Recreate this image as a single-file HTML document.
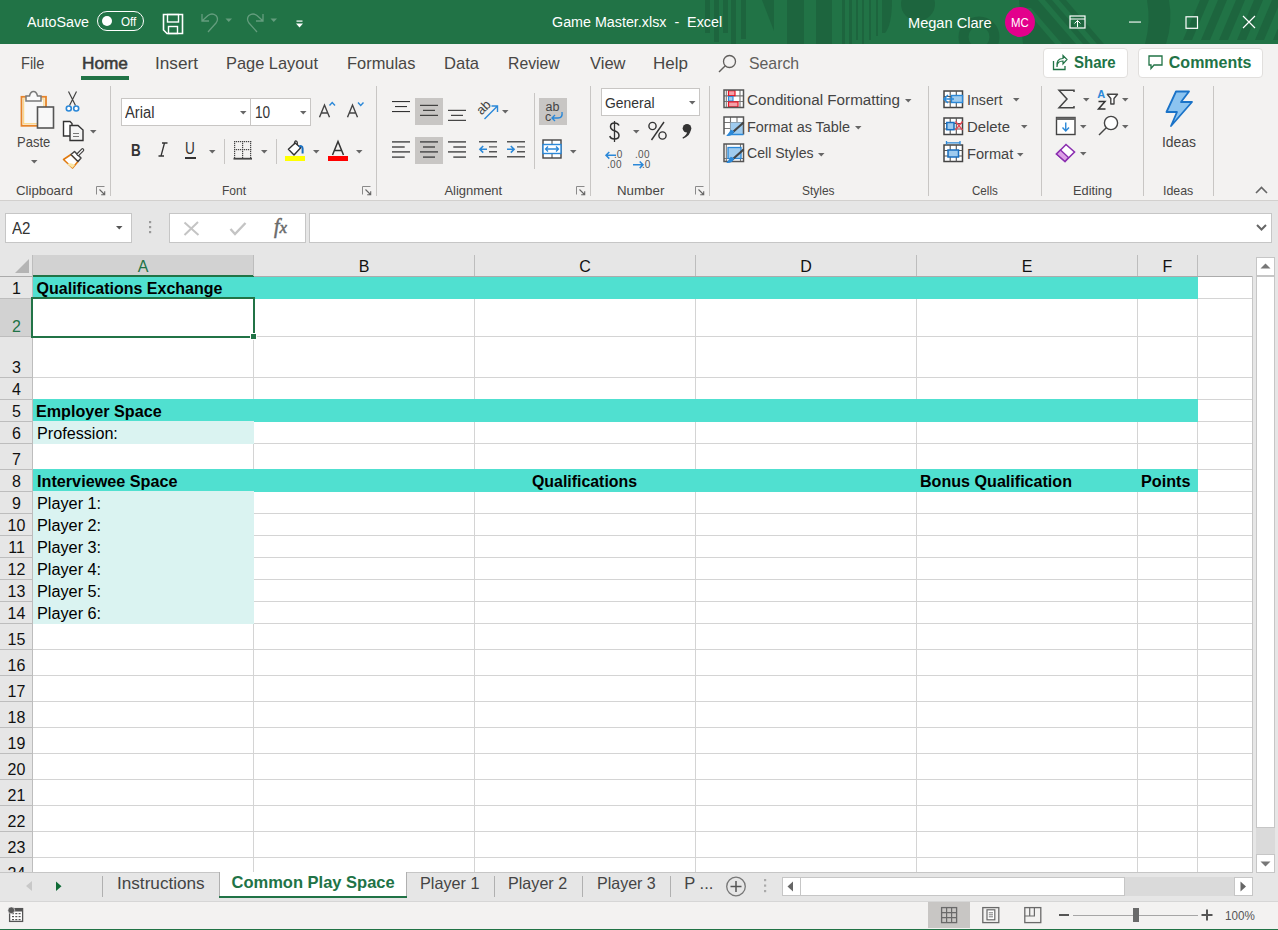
<!DOCTYPE html><html><head><meta charset="utf-8"><style>html,body{margin:0;padding:0}body{width:1278px;height:930px;position:relative;overflow:hidden;background:#f3f2f1;font-family:"Liberation Sans",sans-serif}.t{position:absolute;white-space:pre;line-height:normal;font-family:"Liberation Sans",sans-serif;transform-origin:0 0}svg{overflow:visible}</style></head><body>
<div style="position:absolute;left:0px;top:0px;width:1278px;height:44px;background:#217346"></div>
<svg style="position:absolute;left:0px;top:0px;overflow:hidden;" width="1278" height="44" viewBox="0 0 1278 44"><rect x="705" y="0" width="5" height="33" fill="#1d653e"/><rect x="714" y="0" width="5" height="42" fill="#1d653e"/><rect x="723" y="0" width="5" height="33" fill="#1d653e"/><rect x="731" y="0" width="5" height="44" fill="#1d653e"/><rect x="741" y="0" width="5" height="39" fill="#1d653e"/><rect x="787" y="0" width="17" height="44" fill="#1d653e"/><rect x="816" y="0" width="16" height="44" fill="#1d653e"/><rect x="842" y="0" width="3" height="44" fill="#1d653e"/><rect x="849" y="0" width="3" height="44" fill="#1d653e"/><rect x="856" y="0" width="2" height="40" fill="#1d653e"/><rect x="862" y="0" width="2" height="44" fill="#1d653e"/><rect x="869" y="0" width="2" height="40" fill="#1d653e"/><rect x="876" y="0" width="2" height="36" fill="#1d653e"/><path d="M762 0 L774 0 L774 31 Z" fill="#1d653e"/><circle cx="918" cy="4" r="17" fill="#1d653e"/><circle cx="979" cy="37" r="15.5" fill="none" stroke="#1d653e" stroke-width="10"/><path d="M1019 0 H1066 L1104 44 H1023 Q1021 22 1019 0 Z" fill="#1d653e"/><path d="M1038 0 H1045 L1083.0 44 H1076.0 Z" fill="#217346"/><path d="M1052 0 H1059 L1097.0 44 H1090.0 Z" fill="#217346"/><path d="M1024 8 H1031 L1062.1 44 H1055.1 Z" fill="#217346"/><path d="M1147 0 H1169 Q1173 22 1166 44 H1145 Q1151 22 1147 0 Z" fill="#1d653e"/><path d="M882 0 H892 Q892 25 885 33 H882 Z" fill="#1d653e"/><path d="M1200 0 H1209 L1192 40 H1183 Z" fill="#1d653e"/><path d="M1218 0 H1227 L1210 40 H1201 Z" fill="#1d653e"/><path d="M1236 0 H1245 L1228 40 H1219 Z" fill="#1d653e"/><path d="M1254 0 H1263 L1246 40 H1237 Z" fill="#1d653e"/><path d="M1272 0 H1281 L1264 40 H1255 Z" fill="#1d653e"/><path d="M1290 0 H1299 L1282 40 H1273 Z" fill="#1d653e"/></svg>
<div class="t" style="left:27.30px;top:12.96px;font-size:15.4px;color:#fff;transform:scaleX(0.9302);">AutoSave</div>
<div style="position:absolute;left:97px;top:11px;width:45px;height:18px;border:1.2px solid #fff;border-radius:10px"></div>
<div style="position:absolute;left:102px;top:16px;width:10px;height:10px;background:#fff;border-radius:50%"></div>
<div class="t" style="left:120.60px;top:13.84px;font-size:13px;color:#fff;transform:scaleX(0.8974);">Off</div>
<svg style="position:absolute;left:162px;top:13px;" width="22" height="22" viewBox="0 0 22 22"><path d="M1.5 1.5 H20.5 V20.5 H5 L1.5 17 Z" fill="none" stroke="#fff" stroke-width="1.6"/><rect x="5.5" y="1.5" width="11" height="7.5" fill="none" stroke="#fff" stroke-width="1.4"/><rect x="6.5" y="13.5" width="9" height="7" fill="none" stroke="#fff" stroke-width="1.4"/></svg>
<svg style="position:absolute;left:200px;top:12px;" width="20" height="22" viewBox="0 0 20 22"><path d="M2 2 V9 H9 M2.5 8.5 L8 3.5 Q12 0.5 16 3.5 Q19 7 16 11 L8 20" fill="none" stroke="rgba(255,255,255,0.3)" stroke-width="1.3"/></svg>
<svg style="position:absolute;left:225px;top:18px;" width="8" height="5" viewBox="0 0 8 5"><path d="M0.5 0.5 H7 L3.75 4 Z" fill="rgba(255,255,255,0.3)"/></svg>
<svg style="position:absolute;left:245px;top:12px;" width="20" height="22" viewBox="0 0 20 22"><path d="M18 2 V9 H11 M17.5 8.5 L12 3.5 Q8 0.5 4 3.5 Q1 7 4 11 L12 20" fill="none" stroke="rgba(255,255,255,0.3)" stroke-width="1.3"/></svg>
<svg style="position:absolute;left:270px;top:18px;" width="8" height="5" viewBox="0 0 8 5"><path d="M0.5 0.5 H7 L3.75 4 Z" fill="rgba(255,255,255,0.3)"/></svg>
<svg style="position:absolute;left:296px;top:20px;" width="7" height="8" viewBox="0 0 7 8"><rect x="0.5" y="0.5" width="6" height="1.2" fill="#fff"/><path d="M0 3.5 H7 L3.5 7.5 Z" fill="#fff"/></svg>
<div class="t" style="left:552.20px;top:12.75px;font-size:15.3px;color:#fff;transform:scaleX(0.9350);">Game Master.xlsx  -  Excel</div>
<div class="t" style="left:908.00px;top:13.87px;font-size:15.5px;color:#fff;transform:scaleX(0.9410);">Megan Clare</div>
<div style="position:absolute;left:1005px;top:7px;width:30px;height:30px;background:#e3008c;border-radius:50%"></div>
<div class="t" style="left:1010.70px;top:15.13px;font-size:13px;color:#fff;transform:scaleX(0.8756);">MC</div>
<svg style="position:absolute;left:1069px;top:15px;" width="17" height="14" viewBox="0 0 17 14"><rect x="1" y="1" width="15" height="12" fill="none" stroke="#fff" stroke-width="1.2"/><line x1="1" y1="4" x2="16" y2="4" stroke="#fff" stroke-width="1"/><path d="M5.5 8.5 L8.5 5.5 L11.5 8.5 M8.5 5.5 V12" fill="none" stroke="#fff" stroke-width="1"/></svg>
<svg style="position:absolute;left:1129px;top:21px;" width="12" height="2" viewBox="0 0 12 2"><rect x="0" y="0.5" width="12" height="1.1" fill="#fff"/></svg>
<svg style="position:absolute;left:1185px;top:16px;" width="14" height="13" viewBox="0 0 14 13"><rect x="1" y="0.8" width="11.5" height="11.5" fill="none" stroke="#fff" stroke-width="1.2"/></svg>
<svg style="position:absolute;left:1242px;top:15px;" width="14" height="14" viewBox="0 0 14 14"><path d="M1 1 L13 13 M13 1 L1 13" stroke="#fff" stroke-width="1.2"/></svg>
<div class="t" style="left:21.00px;top:53.62px;font-size:17px;color:#484644;transform:scaleX(0.8550);">File</div>
<div class="t" style="left:155.00px;top:53.62px;font-size:17px;color:#484644;transform:scaleX(1.0118);">Insert</div>
<div class="t" style="left:226.00px;top:53.62px;font-size:17px;color:#484644;transform:scaleX(0.9638);">Page Layout</div>
<div class="t" style="left:347.00px;top:53.62px;font-size:17px;color:#484644;transform:scaleX(0.9663);">Formulas</div>
<div class="t" style="left:444.00px;top:53.62px;font-size:17px;color:#484644;transform:scaleX(0.9734);">Data</div>
<div class="t" style="left:508.30px;top:53.62px;font-size:17px;color:#484644;transform:scaleX(0.9272);">Review</div>
<div class="t" style="left:589.50px;top:53.62px;font-size:17px;color:#484644;transform:scaleX(0.9713);">View</div>
<div class="t" style="left:653.00px;top:53.62px;font-size:17px;color:#484644;">Help</div>
<div class="t" style="left:748.60px;top:53.62px;font-size:17px;color:#605e5c;transform:scaleX(0.9315);">Search</div>
<div class="t" style="left:81.50px;top:53.62px;font-size:17px;color:#3b3a39;transform:scaleX(1.0134);-webkit-text-stroke:0.55px #3b3a39;">Home</div>
<div style="position:absolute;left:81px;top:76px;width:48px;height:4px;background:#217346"></div>
<svg style="position:absolute;left:717px;top:54px;" width="21" height="21" viewBox="0 0 21 21"><circle cx="12.5" cy="7.5" r="6" fill="none" stroke="#605e5c" stroke-width="1.3"/><line x1="8.3" y1="11.7" x2="2" y2="18" stroke="#605e5c" stroke-width="1.4"/></svg>
<div style="position:absolute;left:1043px;top:48px;width:83px;height:28px;background:#fff;border:1px solid #e1dfdd;border-radius:4px"></div>
<div style="position:absolute;left:1138px;top:48px;width:123px;height:28px;background:#fff;border:1px solid #e1dfdd;border-radius:4px"></div>
<svg style="position:absolute;left:1052px;top:55px;" width="16" height="16" viewBox="0 0 16 16"><path d="M1.5 6 V14.5 H13 V11" fill="none" stroke="#217346" stroke-width="1.3"/><path d="M5 12 Q5 6 11 6 V9 L15 4.5 L11 0.5 V3.5 Q4 3.5 5 12 Z" fill="none" stroke="#217346" stroke-width="1.2"/></svg>
<div class="t" style="left:1073.70px;top:54.42px;font-size:16px;color:#217346;font-weight:bold;transform:scaleX(0.9375);">Share</div>
<svg style="position:absolute;left:1148px;top:55px;" width="15" height="15" viewBox="0 0 15 15"><path d="M1 1 H14 V10 H6 L3 13.5 V10 H1 Z" fill="none" stroke="#217346" stroke-width="1.3"/></svg>
<div class="t" style="left:1168.80px;top:54.42px;font-size:16px;color:#217346;font-weight:bold;">Comments</div>
<div style="position:absolute;left:110px;top:86px;width:1px;height:110px;background:#c8c6c4"></div>
<div style="position:absolute;left:376px;top:86px;width:1px;height:110px;background:#c8c6c4"></div>
<div style="position:absolute;left:590px;top:86px;width:1px;height:110px;background:#c8c6c4"></div>
<div style="position:absolute;left:709px;top:86px;width:1px;height:110px;background:#c8c6c4"></div>
<div style="position:absolute;left:928px;top:86px;width:1px;height:110px;background:#c8c6c4"></div>
<div style="position:absolute;left:1041px;top:86px;width:1px;height:110px;background:#c8c6c4"></div>
<div style="position:absolute;left:1143px;top:86px;width:1px;height:110px;background:#c8c6c4"></div>
<div style="position:absolute;left:1213px;top:86px;width:1px;height:110px;background:#c8c6c4"></div>
<div style="position:absolute;left:0px;top:200px;width:1278px;height:1px;background:#d2d0ce"></div>
<div class="t" style="left:15.70px;top:182.94px;font-size:13px;color:#484644;transform:scaleX(1.0208);">Clipboard</div>
<div class="t" style="left:221.60px;top:182.94px;font-size:13px;color:#484644;transform:scaleX(0.9269);">Font</div>
<div class="t" style="left:444.40px;top:182.94px;font-size:13px;color:#484644;">Alignment</div>
<div class="t" style="left:616.50px;top:182.94px;font-size:13px;color:#484644;transform:scaleX(1.0235);">Number</div>
<div class="t" style="left:802.00px;top:182.94px;font-size:13px;color:#484644;transform:scaleX(0.9174);">Styles</div>
<div class="t" style="left:971.70px;top:182.94px;font-size:13px;color:#484644;transform:scaleX(0.8920);">Cells</div>
<div class="t" style="left:1072.50px;top:182.94px;font-size:13px;color:#484644;transform:scaleX(0.9829);">Editing</div>
<div class="t" style="left:1163.20px;top:182.94px;font-size:13px;color:#484644;transform:scaleX(0.9533);">Ideas</div>
<svg style="position:absolute;left:96px;top:186px;" width="10" height="10" viewBox="0 0 10 10"><path d="M0.5 8.5 V0.5 H8.5" fill="none" stroke="#8a8a8a" stroke-width="1"/><path d="M3.5 3.5 L8.5 8.5 M8.7 5.2 V8.7 H5.2" fill="none" stroke="#666" stroke-width="1.1"/></svg>
<svg style="position:absolute;left:362px;top:186px;" width="10" height="10" viewBox="0 0 10 10"><path d="M0.5 8.5 V0.5 H8.5" fill="none" stroke="#8a8a8a" stroke-width="1"/><path d="M3.5 3.5 L8.5 8.5 M8.7 5.2 V8.7 H5.2" fill="none" stroke="#666" stroke-width="1.1"/></svg>
<svg style="position:absolute;left:576px;top:186px;" width="10" height="10" viewBox="0 0 10 10"><path d="M0.5 8.5 V0.5 H8.5" fill="none" stroke="#8a8a8a" stroke-width="1"/><path d="M3.5 3.5 L8.5 8.5 M8.7 5.2 V8.7 H5.2" fill="none" stroke="#666" stroke-width="1.1"/></svg>
<svg style="position:absolute;left:695px;top:186px;" width="10" height="10" viewBox="0 0 10 10"><path d="M0.5 8.5 V0.5 H8.5" fill="none" stroke="#8a8a8a" stroke-width="1"/><path d="M3.5 3.5 L8.5 8.5 M8.7 5.2 V8.7 H5.2" fill="none" stroke="#666" stroke-width="1.1"/></svg>
<svg style="position:absolute;left:17px;top:89px;" width="40" height="42" viewBox="0 0 40 42"><rect x="4.5" y="7.8" width="24.5" height="29" fill="#f8f8f8" stroke="#e6842a" stroke-width="1.8"/><rect x="6.6" y="9.9" width="20.3" height="24.8" fill="#f8f8f8" stroke="#fbd88c" stroke-width="1.3"/><path d="M9 7 H12.5 Q13.5 2.6 16.5 2.6 Q19.5 2.6 20.5 7 H24 V12 H9 Z" fill="#fafafa" stroke="#7a7a7a" stroke-width="1.5"/><rect x="20.5" y="18" width="16" height="21" fill="#f8f8f8" stroke="#555" stroke-width="1.6"/></svg>
<div class="t" style="left:17.40px;top:133.23px;font-size:15px;color:#484644;transform:scaleX(0.8663);">Paste</div>
<svg style="position:absolute;left:31px;top:160px;" width="7" height="4" viewBox="0 0 7 4"><path d="M0 0 H6.5 L3.25 3.5 Z" fill="#666"/></svg>
<svg style="position:absolute;left:65px;top:91px;" width="16" height="22" viewBox="0 0 16 22"><path d="M3.5 0.5 L10.5 14.5 M11.5 0.5 L4.5 14.5" stroke="#444" stroke-width="1.2"/><circle cx="3.8" cy="17.5" r="2.5" fill="#fff" stroke="#2b88d8" stroke-width="1.6"/><circle cx="11.2" cy="17.5" r="2.5" fill="#fff" stroke="#2b88d8" stroke-width="1.6"/></svg>
<svg style="position:absolute;left:62px;top:120px;" width="23" height="22" viewBox="0 0 23 22"><path d="M1.5 1.5 H8 L10 3.5 V16 H1.5 Z" fill="#fff" stroke="#333" stroke-width="1.4"/><path d="M8 5.5 H16 L21 10 V20.5 H8 Z" fill="#f4f4f4" stroke="#333" stroke-width="1.4"/><path d="M11 13.5 H17 M11 16.5 H17" stroke="#777" stroke-width="1.2"/></svg>
<svg style="position:absolute;left:90px;top:130px;" width="7" height="4" viewBox="0 0 7 4"><path d="M0 0 H6.5 L3.25 3.5 Z" fill="#666"/></svg>
<svg style="position:absolute;left:62px;top:149px;" width="23" height="21" viewBox="0 0 23 21"><path d="M1.5 10.5 L9 5.5 L16 12.5 L10.5 19 Z" fill="#fff" stroke="#e07a10" stroke-width="1.6" stroke-linejoin="round"/><path d="M5 15 L10.5 19 L13 16 Q9 13 5 15 Z" fill="#fce6a4"/><path d="M9 5.5 L12.5 2.5 L19 9 L16 12.5 Z" fill="#fff" stroke="#444" stroke-width="1.5" stroke-linejoin="round"/><path d="M16.2 5.3 L20.5 1" stroke="#444" stroke-width="3.6" stroke-linecap="round"/><path d="M16.2 5.3 L20.5 1" stroke="#fff" stroke-width="1.2" stroke-linecap="round"/></svg>
<div style="position:absolute;left:121px;top:98px;width:130px;height:28px;background:#fff;border:1px solid #c8c6c4;box-sizing:border-box"></div>
<div style="position:absolute;left:250px;top:98px;width:61px;height:28px;background:#fff;border:1px solid #c8c6c4;box-sizing:border-box"></div>
<div class="t" style="left:124.50px;top:103.72px;font-size:16px;color:#333;transform:scaleX(0.9219);">Arial</div>
<svg style="position:absolute;left:240px;top:111px;" width="7" height="4" viewBox="0 0 7 4"><path d="M0 0 H6.5 L3.25 3.5 Z" fill="#666"/></svg>
<div class="t" style="left:255.20px;top:103.72px;font-size:16px;color:#333;transform:scaleX(0.8502);">10</div>
<svg style="position:absolute;left:300px;top:111px;" width="7" height="4" viewBox="0 0 7 4"><path d="M0 0 H6.5 L3.25 3.5 Z" fill="#666"/></svg>
<svg style="position:absolute;left:318px;top:100px;" width="19" height="19" viewBox="0 0 19 19"><path d="M1.5 17.3 L6.5 5 L11.5 17.3 M3.3 13 H9.7" fill="none" stroke="#444" stroke-width="1.4"/><path d="M11.5 5.5 L14.2 2.5 L17 5.5" fill="none" stroke="#2b88d8" stroke-width="1.4"/></svg>
<svg style="position:absolute;left:346px;top:100px;" width="19" height="19" viewBox="0 0 19 19"><path d="M1.5 17.3 L6.5 5 L11.5 17.3 M3.3 13 H9.7" fill="none" stroke="#444" stroke-width="1.4"/><path d="M12 2.5 L14.7 5.5 L17.5 2.5" fill="none" stroke="#2b88d8" stroke-width="1.4"/></svg>
<div class="t" style="left:130.60px;top:140.67px;font-size:16.5px;color:#333;font-weight:bold;transform:scaleX(0.8165);">B</div>
<svg style="position:absolute;left:158px;top:142px;" width="10" height="15" viewBox="0 0 10 15"><path d="M6.5 1 L3 14 M4 1 H9.5 M0.5 14 H6" fill="none" stroke="#333" stroke-width="1.3"/></svg>
<div class="t" style="left:185.40px;top:140.32px;font-size:16px;color:#333;transform:scaleX(0.8507);">U</div>
<div style="position:absolute;left:184.6px;top:157px;width:11.2px;height:1.6px;background:#333"></div>
<svg style="position:absolute;left:209px;top:150px;" width="7" height="4" viewBox="0 0 7 4"><path d="M0 0 H6.5 L3.25 3.5 Z" fill="#666"/></svg>
<div style="position:absolute;left:224px;top:139px;width:1px;height:25px;background:#c8c6c4"></div>
<svg style="position:absolute;left:233px;top:140px;" width="22" height="21" viewBox="0 0 22 21"><rect x="1" y="1" width="1.2" height="1.2" fill="#444"/><rect x="1" y="3" width="1.2" height="1.2" fill="#444"/><rect x="1" y="5" width="1.2" height="1.2" fill="#444"/><rect x="1" y="7" width="1.2" height="1.2" fill="#444"/><rect x="1" y="9" width="1.2" height="1.2" fill="#444"/><rect x="1" y="11" width="1.2" height="1.2" fill="#444"/><rect x="1" y="13" width="1.2" height="1.2" fill="#444"/><rect x="1" y="15" width="1.2" height="1.2" fill="#444"/><rect x="1" y="17" width="1.2" height="1.2" fill="#444"/><rect x="9" y="1" width="1.2" height="1.2" fill="#444"/><rect x="9" y="3" width="1.2" height="1.2" fill="#444"/><rect x="9" y="5" width="1.2" height="1.2" fill="#444"/><rect x="9" y="7" width="1.2" height="1.2" fill="#444"/><rect x="9" y="9" width="1.2" height="1.2" fill="#444"/><rect x="9" y="11" width="1.2" height="1.2" fill="#444"/><rect x="9" y="13" width="1.2" height="1.2" fill="#444"/><rect x="9" y="15" width="1.2" height="1.2" fill="#444"/><rect x="9" y="17" width="1.2" height="1.2" fill="#444"/><rect x="17" y="1" width="1.2" height="1.2" fill="#444"/><rect x="17" y="3" width="1.2" height="1.2" fill="#444"/><rect x="17" y="5" width="1.2" height="1.2" fill="#444"/><rect x="17" y="7" width="1.2" height="1.2" fill="#444"/><rect x="17" y="9" width="1.2" height="1.2" fill="#444"/><rect x="17" y="11" width="1.2" height="1.2" fill="#444"/><rect x="17" y="13" width="1.2" height="1.2" fill="#444"/><rect x="17" y="15" width="1.2" height="1.2" fill="#444"/><rect x="17" y="17" width="1.2" height="1.2" fill="#444"/><rect x="1" y="1" width="1.2" height="1.2" fill="#444"/><rect x="3" y="1" width="1.2" height="1.2" fill="#444"/><rect x="5" y="1" width="1.2" height="1.2" fill="#444"/><rect x="7" y="1" width="1.2" height="1.2" fill="#444"/><rect x="9" y="1" width="1.2" height="1.2" fill="#444"/><rect x="11" y="1" width="1.2" height="1.2" fill="#444"/><rect x="13" y="1" width="1.2" height="1.2" fill="#444"/><rect x="15" y="1" width="1.2" height="1.2" fill="#444"/><rect x="17" y="1" width="1.2" height="1.2" fill="#444"/><rect x="1" y="9" width="1.2" height="1.2" fill="#444"/><rect x="3" y="9" width="1.2" height="1.2" fill="#444"/><rect x="5" y="9" width="1.2" height="1.2" fill="#444"/><rect x="7" y="9" width="1.2" height="1.2" fill="#444"/><rect x="9" y="9" width="1.2" height="1.2" fill="#444"/><rect x="11" y="9" width="1.2" height="1.2" fill="#444"/><rect x="13" y="9" width="1.2" height="1.2" fill="#444"/><rect x="15" y="9" width="1.2" height="1.2" fill="#444"/><rect x="17" y="9" width="1.2" height="1.2" fill="#444"/><rect x="0.5" y="17.8" width="18.5" height="1.8" fill="#444"/></svg>
<svg style="position:absolute;left:261px;top:150px;" width="7" height="4" viewBox="0 0 7 4"><path d="M0 0 H6.5 L3.25 3.5 Z" fill="#666"/></svg>
<div style="position:absolute;left:276px;top:139px;width:1px;height:25px;background:#c8c6c4"></div>
<svg style="position:absolute;left:286px;top:140px;" width="20" height="22" viewBox="0 0 20 22"><path d="M2.4 9.3 L9.2 3 L14.7 7.7 L8 15 Z" fill="#fff" stroke="#333" stroke-width="1.4" stroke-linejoin="round"/><path d="M8.3 4.2 Q8.5 0.6 10.2 1 Q11.8 1.5 11.2 5" fill="none" stroke="#333" stroke-width="1.2"/><path d="M13 6.6 Q16.3 5 16.6 8.5 V13.5" fill="none" stroke="#1a6fc0" stroke-width="2"/><rect x="-1" y="16" width="20" height="5" fill="#ffff00"/></svg>
<svg style="position:absolute;left:313px;top:150px;" width="7" height="4" viewBox="0 0 7 4"><path d="M0 0 H6.5 L3.25 3.5 Z" fill="#666"/></svg>
<svg style="position:absolute;left:327px;top:140px;" width="22" height="22" viewBox="0 0 22 22"><path d="M5.5 15 L11 1.5 L16.5 15 M7.5 10.5 H14.5" fill="none" stroke="#333" stroke-width="1.5"/><rect x="1" y="16" width="20" height="5" fill="#ff0000"/></svg>
<svg style="position:absolute;left:356px;top:150px;" width="7" height="4" viewBox="0 0 7 4"><path d="M0 0 H6.5 L3.25 3.5 Z" fill="#666"/></svg>
<div style="position:absolute;left:415px;top:98px;width:28px;height:27px;background:#c8c6c4"></div>
<div style="position:absolute;left:415px;top:137px;width:28px;height:27px;background:#c8c6c4"></div>
<div style="position:absolute;left:539px;top:98px;width:28px;height:27px;background:#c8c6c4"></div>
<svg style="position:absolute;left:392px;top:0px;top:0;" width="20" height="200" viewBox="0 0 20 200"><rect x="0" y="101" width="18" height="1.1" fill="#333"/><rect x="3" y="106" width="12" height="1.1" fill="#333"/><rect x="0" y="111" width="18" height="1.1" fill="#333"/></svg>
<svg style="position:absolute;left:420px;top:0px;top:0;" width="20" height="200" viewBox="0 0 20 200"><rect x="0" y="104.8" width="18" height="1.1" fill="#333"/><rect x="3" y="109.8" width="12" height="1.1" fill="#333"/><rect x="0" y="114.8" width="18" height="1.1" fill="#333"/></svg>
<svg style="position:absolute;left:448px;top:0px;top:0;" width="20" height="200" viewBox="0 0 20 200"><rect x="0" y="109.8" width="18" height="1.1" fill="#333"/><rect x="3" y="114.8" width="12" height="1.1" fill="#333"/><rect x="0" y="119.8" width="18" height="1.1" fill="#333"/></svg>
<svg style="position:absolute;left:392px;top:0px;top:0;" width="20" height="200" viewBox="0 0 20 200"><rect x="0" y="141.2" width="18" height="1.4" fill="#444"/><rect x="0" y="146.3" width="12.7" height="1.4" fill="#444"/><rect x="0" y="151.2" width="18" height="1.4" fill="#444"/><rect x="0" y="156.4" width="12.7" height="1.4" fill="#444"/></svg>
<svg style="position:absolute;left:420px;top:0px;top:0;" width="20" height="200" viewBox="0 0 20 200"><rect x="0" y="141.2" width="18" height="1.4" fill="#444"/><rect x="3" y="146.3" width="12" height="1.4" fill="#444"/><rect x="0" y="151.2" width="18" height="1.4" fill="#444"/><rect x="3" y="156.4" width="12" height="1.4" fill="#444"/></svg>
<svg style="position:absolute;left:448px;top:0px;top:0;" width="20" height="200" viewBox="0 0 20 200"><rect x="0" y="141.2" width="18" height="1.4" fill="#444"/><rect x="5.3" y="146.3" width="12.7" height="1.4" fill="#444"/><rect x="0" y="151.2" width="18" height="1.4" fill="#444"/><rect x="5.3" y="156.4" width="12.7" height="1.4" fill="#444"/></svg>
<svg style="position:absolute;left:477px;top:99px;" width="23" height="22" viewBox="0 0 23 22"><text x="0" y="0" font-family="Liberation Sans" font-size="13" fill="#444" transform="translate(4.5 16.5) rotate(-45)">ab</text><path d="M7.5 20 L20 7.5 M14.5 7 H20.5 V13" fill="none" stroke="#2b88d8" stroke-width="1.4"/></svg>
<svg style="position:absolute;left:502px;top:110px;" width="7" height="4" viewBox="0 0 7 4"><path d="M0 0 H6.5 L3.25 3.5 Z" fill="#666"/></svg>
<svg style="position:absolute;left:479px;top:140px;" width="19" height="18" viewBox="0 0 19 18"><path d="M0 1.8 H18 M10 6.9 H18 M10 11.8 H18 M0 16.7 H18" stroke="#555" stroke-width="1.4"/><path d="M8 9.3 H1 M4.2 6 L0.9 9.3 L4.2 12.6" fill="none" stroke="#2b88d8" stroke-width="1.6"/></svg>
<svg style="position:absolute;left:507px;top:140px;" width="19" height="18" viewBox="0 0 19 18"><path d="M0 1.8 H18 M10 6.9 H18 M10 11.8 H18 M0 16.7 H18" stroke="#555" stroke-width="1.4"/><path d="M0 9.3 H7 M3.8 6 L7.1 9.3 L3.8 12.6" fill="none" stroke="#2b88d8" stroke-width="1.6"/></svg>
<div style="position:absolute;left:534px;top:93px;width:1px;height:76px;background:#c8c6c4"></div>
<svg style="position:absolute;left:542px;top:101px;" width="26" height="22" viewBox="0 0 26 22"><text x="3.5" y="10" font-family="Liberation Sans" font-size="12.5" fill="#444">ab</text><text x="3" y="20" font-family="Liberation Sans" font-size="12.5" fill="#444">c</text><path d="M20 11 Q21 17 16 17 H10 M13 14 L10 17 L13 20" fill="none" stroke="#2b88d8" stroke-width="1.4"/></svg>
<svg style="position:absolute;left:542px;top:139px;" width="21" height="21" viewBox="0 0 21 21"><rect x="1" y="1" width="18" height="18" fill="#fff" stroke="#444" stroke-width="1.4"/><path d="M10 1 V19" stroke="#444" stroke-width="1"/><rect x="1" y="5.5" width="18" height="9" fill="#fff" stroke="#2b88d8" stroke-width="1.4"/><path d="M3.5 10 H16.5 M6 7.5 L3.5 10 L6 12.5 M14 7.5 L16.5 10 L14 12.5" fill="none" stroke="#2b88d8" stroke-width="1.3"/></svg>
<svg style="position:absolute;left:570px;top:150px;" width="7" height="4" viewBox="0 0 7 4"><path d="M0 0 H6.5 L3.25 3.5 Z" fill="#666"/></svg>
<div style="position:absolute;left:601px;top:88px;width:99px;height:28px;background:#fff;border:1px solid #c8c6c4;box-sizing:border-box"></div>
<div class="t" style="left:604.50px;top:93.57px;font-size:15.5px;color:#333;transform:scaleX(0.8971);">General</div>
<svg style="position:absolute;left:689px;top:101px;" width="7" height="4" viewBox="0 0 7 4"><path d="M0 0 H6.5 L3.25 3.5 Z" fill="#666"/></svg>
<svg style="position:absolute;left:608px;top:120px;" width="13" height="23" viewBox="0 0 13 23"><path d="M11 5.5 Q10 3 6.5 3 Q2.5 3 2.5 6.5 Q2.5 9.5 6.5 10.8 Q11 12.2 11 15.5 Q11 19 6.5 19 Q2.5 19 1.8 16" fill="none" stroke="#333" stroke-width="1.5"/><path d="M6.5 1 V22" stroke="#333" stroke-width="1.3"/></svg>
<svg style="position:absolute;left:633px;top:130px;" width="7" height="4" viewBox="0 0 7 4"><path d="M0 0 H6.5 L3.25 3.5 Z" fill="#666"/></svg>
<svg style="position:absolute;left:648px;top:121px;" width="21" height="20" viewBox="0 0 21 20"><circle cx="4.5" cy="5" r="3.6" fill="none" stroke="#333" stroke-width="1.4"/><circle cx="14.5" cy="14.5" r="3.6" fill="none" stroke="#333" stroke-width="1.4"/><path d="M16 1 L3.5 19" stroke="#333" stroke-width="1.4"/></svg>
<svg style="position:absolute;left:681px;top:123px;" width="12" height="17" viewBox="0 0 12 17"><circle cx="6" cy="5.3" r="4.3" fill="#333"/><path d="M9.6 6.5 Q10 12 2 15.8 L1.5 14.6 Q6 12 6.2 8.5 Z" fill="#333"/></svg>
<svg style="position:absolute;left:604px;top:149px;" width="22" height="21" viewBox="0 0 22 21"><path d="M12 6.3 H2 M5.3 3 L2 6.3 L5.3 9.6" fill="none" stroke="#2b88d8" stroke-width="1.5"/><text x="10" y="9" font-family="Liberation Sans" font-size="10" fill="#555">.0</text><text x="3" y="19" font-family="Liberation Sans" font-size="10" fill="#555" letter-spacing="0.3">.00</text></svg>
<svg style="position:absolute;left:632px;top:149px;" width="22" height="21" viewBox="0 0 22 21"><text x="3" y="9" font-family="Liberation Sans" font-size="10" fill="#555" letter-spacing="0.3">.00</text><path d="M1 15.8 H11 M7.7 12.5 L11 15.8 L7.7 19.1" fill="none" stroke="#2b88d8" stroke-width="1.5"/><text x="10" y="19" font-family="Liberation Sans" font-size="10" fill="#555">.0</text></svg>
<svg style="position:absolute;left:723px;top:89px;" width="22" height="20" viewBox="0 0 22 20"><rect x="1" y="1" width="19.5" height="17.5" fill="#fff"/><path d="M3.3 1 V18.5 M17 1 V18.5 M1 6.9 H20.5 M1 12.5 H20.5" stroke="#777" stroke-width="1.1"/><rect x="5.5" y="1.7" width="6.5" height="5" fill="#f4a0a8" stroke="#e81123" stroke-width="1.2"/><rect x="5.5" y="7.5" width="4.5" height="4.6" fill="#9fcbee" stroke="#2b88d8" stroke-width="1.1"/><rect x="5.5" y="12.9" width="9.5" height="5" fill="#f4a0a8" stroke="#e81123" stroke-width="1.2"/><rect x="1" y="1" width="19.5" height="17.5" fill="none" stroke="#555" stroke-width="1.5"/></svg>
<svg style="position:absolute;left:723px;top:116px;" width="22" height="21" viewBox="0 0 22 21"><rect x="1" y="1" width="19.5" height="17.5" fill="#fff"/><path d="M7.5 1 V18.5 M14 1 V18.5 M1 6.5 H20.5 M1 12.5 H20.5" stroke="#777" stroke-width="1.1"/><rect x="7.5" y="6.5" width="13" height="12" fill="#9fcbee"/><path d="M1 18.5 V1 H20.5 V18.5" fill="none" stroke="#555" stroke-width="1.5"/><path d="M20.5 18.5 H7" stroke="#2b88d8" stroke-width="1.5"/><path d="M20 7 L10 16" stroke="#444" stroke-width="2.2" stroke-linecap="round"/><path d="M10.5 15.5 Q9 19.5 4.5 19.5 Q7 16.5 8 14.5 Z" fill="#2b88d8" stroke="#2b88d8" stroke-width="1.2"/></svg>
<svg style="position:absolute;left:723px;top:143px;" width="22" height="21" viewBox="0 0 22 21"><rect x="1" y="1" width="19.5" height="17.5" fill="#fff"/><path d="M3.3 1 V18.5 M17.5 1 V18.5 M1 15.5 H20.5" stroke="#777" stroke-width="1.1"/><rect x="5" y="4.5" width="13" height="11" fill="#9fcbee" stroke="#2b88d8" stroke-width="1.3"/><rect x="1" y="1" width="19.5" height="17.5" fill="none" stroke="#555" stroke-width="1.5"/><path d="M20 7 L10 16" stroke="#444" stroke-width="2.2" stroke-linecap="round"/><path d="M10.5 15.5 Q9 19.5 4.5 19.5 Q7 16.5 8 14.5 Z" fill="#2b88d8" stroke="#2b88d8" stroke-width="1.2"/></svg>
<div class="t" style="left:747.40px;top:90.97px;font-size:15.5px;color:#444;transform:scaleX(0.9812);">Conditional Formatting</div>
<svg style="position:absolute;left:905px;top:99px;" width="7" height="4" viewBox="0 0 7 4"><path d="M0 0 H6.5 L3.25 3.5 Z" fill="#666"/></svg>
<div class="t" style="left:747.40px;top:117.67px;font-size:15.5px;color:#444;transform:scaleX(0.9294);">Format as Table</div>
<svg style="position:absolute;left:855px;top:126px;" width="7" height="4" viewBox="0 0 7 4"><path d="M0 0 H6.5 L3.25 3.5 Z" fill="#666"/></svg>
<div class="t" style="left:747.40px;top:144.27px;font-size:15.5px;color:#444;transform:scaleX(0.9094);">Cell Styles</div>
<svg style="position:absolute;left:818px;top:153px;" width="7" height="4" viewBox="0 0 7 4"><path d="M0 0 H6.5 L3.25 3.5 Z" fill="#666"/></svg>
<svg style="position:absolute;left:943px;top:89.5px;" width="22" height="20" viewBox="0 0 22 20"><rect x="1" y="1" width="18.5" height="16.5" fill="#fff" stroke="#444" stroke-width="1.5"/><path d="M7.2 1 V17.5 M13.3 1 V17.5 M1 6.5 H19.5 M1 12 H19.5" stroke="#555" stroke-width="1.1"/><rect x="8.5" y="5.5" width="11" height="7" fill="#9fcbee" stroke="#2b88d8" stroke-width="1.4"/><path d="M11 9 H1.2 M5 5 L1 9 L5 13" fill="none" stroke="#2b88d8" stroke-width="1.6"/></svg>
<div class="t" style="left:966.50px;top:90.97px;font-size:15.5px;color:#444;transform:scaleX(0.9161);">Insert</div>
<svg style="position:absolute;left:1013px;top:98px;" width="7" height="4" viewBox="0 0 7 4"><path d="M0 0 H6.5 L3.25 3.5 Z" fill="#666"/></svg>
<svg style="position:absolute;left:943px;top:116.5px;" width="22" height="20" viewBox="0 0 22 20"><rect x="1" y="1" width="18.5" height="16.5" fill="#fff" stroke="#444" stroke-width="1.5"/><path d="M7.2 1 V17.5 M13.3 1 V17.5 M1 6.5 H19.5 M1 12 H19.5" stroke="#555" stroke-width="1.1"/><rect x="3.8" y="5.5" width="7.2" height="7.2" fill="#9fcbee" stroke="#1a6fc0" stroke-width="1.5"/><path d="M12.5 4.5 L19.5 13 M19.5 4.5 L12.5 13" stroke="#e74856" stroke-width="1.4"/></svg>
<div class="t" style="left:966.50px;top:117.97px;font-size:15.5px;color:#444;transform:scaleX(0.9599);">Delete</div>
<svg style="position:absolute;left:1021px;top:125px;" width="7" height="4" viewBox="0 0 7 4"><path d="M0 0 H6.5 L3.25 3.5 Z" fill="#666"/></svg>
<svg style="position:absolute;left:943px;top:144px;" width="22" height="20" viewBox="0 0 22 20"><rect x="1" y="1" width="18.5" height="16.5" fill="#fff" stroke="#444" stroke-width="1.5"/><path d="M7.2 1 V17.5 M13.3 1 V17.5 M1 6.5 H19.5 M1 12 H19.5" stroke="#555" stroke-width="1.1"/><rect x="5" y="6" width="10.5" height="7" fill="#9fcbee" stroke="#1a6fc0" stroke-width="1.5"/><path d="M3.5 -1.2 H17 M3.5 -3 V0.6 M17 -3 V0.6" stroke="#2b88d8" stroke-width="1.3"/></svg>
<div class="t" style="left:966.50px;top:144.77px;font-size:15.5px;color:#444;transform:scaleX(0.9418);">Format</div>
<svg style="position:absolute;left:1017px;top:153px;" width="7" height="4" viewBox="0 0 7 4"><path d="M0 0 H6.5 L3.25 3.5 Z" fill="#666"/></svg>
<svg style="position:absolute;left:1057px;top:89px;" width="19" height="20" viewBox="0 0 19 20"><path d="M17 3 V1.2 H2 L10 10 L2 18.8 H17 V17" fill="none" stroke="#444" stroke-width="1.5"/></svg>
<svg style="position:absolute;left:1083px;top:98px;" width="7" height="4" viewBox="0 0 7 4"><path d="M0 0 H6.5 L3.25 3.5 Z" fill="#666"/></svg>
<svg style="position:absolute;left:1097px;top:88px;" width="23" height="23" viewBox="0 0 23 23"><text x="0.3" y="10" font-family="Liberation Sans" font-size="11" font-weight="bold" fill="#2b88d8">A</text><path d="M1.5 13.5 H8 L1.5 21 H8.5" fill="none" stroke="#333" stroke-width="1.5"/><path d="M10.3 6.3 H20.5 L17 10.5 V16 H13.8 V10.5 Z" fill="#fff" stroke="#444" stroke-width="1.4" stroke-linejoin="round"/></svg>
<svg style="position:absolute;left:1122px;top:98px;" width="7" height="4" viewBox="0 0 7 4"><path d="M0 0 H6.5 L3.25 3.5 Z" fill="#666"/></svg>
<svg style="position:absolute;left:1055px;top:116px;" width="22" height="20" viewBox="0 0 22 20"><rect x="1.5" y="1.5" width="18.5" height="17" fill="#fff" stroke="#444" stroke-width="1.4"/><rect x="1.5" y="1.5" width="18.5" height="2.5" fill="#666"/><path d="M10.75 6.5 V15 M7.5 11.5 L10.75 15 L14 11.5" fill="none" stroke="#2b88d8" stroke-width="1.4"/></svg>
<svg style="position:absolute;left:1080px;top:125px;" width="7" height="4" viewBox="0 0 7 4"><path d="M0 0 H6.5 L3.25 3.5 Z" fill="#666"/></svg>
<svg style="position:absolute;left:1097px;top:115px;" width="22" height="22" viewBox="0 0 22 22"><circle cx="14" cy="8" r="6.6" fill="#fff" stroke="#444" stroke-width="1.4"/><line x1="9.3" y1="12.7" x2="2" y2="20" stroke="#444" stroke-width="1.4"/></svg>
<svg style="position:absolute;left:1122px;top:125px;" width="7" height="4" viewBox="0 0 7 4"><path d="M0 0 H6.5 L3.25 3.5 Z" fill="#666"/></svg>
<svg style="position:absolute;left:1055px;top:142px;" width="21" height="22" viewBox="0 0 21 22"><path d="M1.5 12 L11 2.5 L19.5 10 L10 19.5 Z" fill="#fff" stroke="#8b2fb0" stroke-width="1.6"/><path d="M1.5 12 L5.5 8 L13.5 15.5 L10 19.5 Z" fill="#dca0e6" stroke="#8b2fb0" stroke-width="1.4"/></svg>
<svg style="position:absolute;left:1080px;top:152px;" width="7" height="4" viewBox="0 0 7 4"><path d="M0 0 H6.5 L3.25 3.5 Z" fill="#666"/></svg>
<svg style="position:absolute;left:1164px;top:90px;" width="30" height="38" viewBox="0 0 30 38"><path d="M12 1.5 H25 L17 12 H28 L7 36 L13 22 H2.5 Z" fill="#8cc4f0" stroke="#1a73c8" stroke-width="1.8" stroke-linejoin="round"/></svg>
<div class="t" style="left:1161.70px;top:132.77px;font-size:15.5px;color:#444;transform:scaleX(0.8972);">Ideas</div>
<svg style="position:absolute;left:1255px;top:186px;" width="13" height="8" viewBox="0 0 13 8"><path d="M1 7 L6.5 1.5 L12 7" fill="none" stroke="#666" stroke-width="1.6"/></svg>
<div style="position:absolute;left:0px;top:201px;width:1278px;height:54px;background:#e6e6e6"></div>
<div style="position:absolute;left:5px;top:213px;width:127px;height:30px;background:#fff;border:1px solid #c6c6c6;box-sizing:border-box"></div>
<div class="t" style="left:12.00px;top:219.72px;font-size:16px;color:#333;transform:scaleX(0.9439);">A2</div>
<svg style="position:absolute;left:116px;top:226px;" width="7" height="4" viewBox="0 0 7 4"><path d="M0 0 H6.5 L3.25 3.5 Z" fill="#555"/></svg>
<svg style="position:absolute;left:148px;top:220px;" width="5" height="15" viewBox="0 0 5 15"><rect x="1" y="1" width="2.2" height="2.2" fill="#999"/><rect x="1" y="6" width="2.2" height="2.2" fill="#999"/><rect x="1" y="11" width="2.2" height="2.2" fill="#999"/></svg>
<div style="position:absolute;left:169px;top:213px;width:137px;height:30px;background:#fff;border:1px solid #c6c6c6;box-sizing:border-box"></div>
<svg style="position:absolute;left:183px;top:221px;" width="17" height="15" viewBox="0 0 17 15"><path d="M1.5 1.5 L15.5 14 M15 1 L1.5 14" stroke="#c4c4c4" stroke-width="2"/></svg>
<svg style="position:absolute;left:229px;top:221px;" width="18" height="15" viewBox="0 0 18 15"><path d="M1.5 8 L6 13 L16.5 2" fill="none" stroke="#c4c4c4" stroke-width="2.4"/></svg>
<div class="t" style="left:274px;top:215px;font-size:20px;font-family:'Liberation Serif',serif;font-style:italic;color:#6a6a6a;-webkit-text-stroke:0.5px #6a6a6a;">f<span style="font-size:17px">x</span></div>
<div style="position:absolute;left:309px;top:213px;width:963px;height:30px;background:#fff;border:1px solid #c6c6c6;box-sizing:border-box"></div>
<svg style="position:absolute;left:1256px;top:224px;" width="11" height="7" viewBox="0 0 11 7"><path d="M1 1 L5.5 5.5 L10 1" fill="none" stroke="#666" stroke-width="2"/></svg>
<div style="position:absolute;left:0px;top:255px;width:1253px;height:22px;background:#e6e6e6"></div>
<div style="position:absolute;left:0px;top:277px;width:33px;height:596px;background:#e6e6e6"></div>
<div style="position:absolute;left:33px;top:277px;width:1220px;height:596px;background:#fff"></div>
<div style="position:absolute;left:0px;top:276px;width:1253px;height:1px;background:#ababab"></div>
<div style="position:absolute;left:32px;top:255px;width:1px;height:618px;background:#bdbdbd"></div>
<svg style="position:absolute;left:14px;top:258px;" width="16" height="16" viewBox="0 0 16 16"><path d="M15 1 V15 H1 Z" fill="#b4b4b4"/></svg>
<div style="position:absolute;left:33px;top:255px;width:220px;height:20px;background:#d2d2d2"></div>
<div style="position:absolute;left:33px;top:275px;width:221px;height:2px;background:#217346"></div>
<div style="position:absolute;left:253px;top:255px;width:1px;height:21px;background:#bdbdbd"></div>
<div style="position:absolute;left:474px;top:255px;width:1px;height:21px;background:#bdbdbd"></div>
<div style="position:absolute;left:695px;top:255px;width:1px;height:21px;background:#bdbdbd"></div>
<div style="position:absolute;left:916px;top:255px;width:1px;height:21px;background:#bdbdbd"></div>
<div style="position:absolute;left:1137px;top:255px;width:1px;height:21px;background:#bdbdbd"></div>
<div style="position:absolute;left:1197px;top:255px;width:1px;height:21px;background:#bdbdbd"></div>
<div class="t" style="left:137.66px;top:258.12px;font-size:16px;color:#217346;">A</div>
<div class="t" style="left:358.66px;top:258.12px;font-size:16px;color:#111;">B</div>
<div class="t" style="left:579.22px;top:258.12px;font-size:16px;color:#111;">C</div>
<div class="t" style="left:800.22px;top:258.12px;font-size:16px;color:#111;">D</div>
<div class="t" style="left:1021.66px;top:258.12px;font-size:16px;color:#111;">E</div>
<div class="t" style="left:1162.61px;top:258.12px;font-size:16px;color:#111;">F</div>
<div style="position:absolute;left:0px;top:298px;width:32px;height:1px;background:#bdbdbd"></div>
<div style="position:absolute;left:33px;top:298px;width:1220px;height:1px;background:#d4d4d4"></div>
<div style="position:absolute;left:0px;top:336px;width:32px;height:1px;background:#bdbdbd"></div>
<div style="position:absolute;left:33px;top:336px;width:1220px;height:1px;background:#d4d4d4"></div>
<div style="position:absolute;left:0px;top:377px;width:32px;height:1px;background:#bdbdbd"></div>
<div style="position:absolute;left:33px;top:377px;width:1220px;height:1px;background:#d4d4d4"></div>
<div style="position:absolute;left:0px;top:399px;width:32px;height:1px;background:#bdbdbd"></div>
<div style="position:absolute;left:33px;top:399px;width:1220px;height:1px;background:#d4d4d4"></div>
<div style="position:absolute;left:0px;top:421px;width:32px;height:1px;background:#bdbdbd"></div>
<div style="position:absolute;left:33px;top:421px;width:1220px;height:1px;background:#d4d4d4"></div>
<div style="position:absolute;left:0px;top:443px;width:32px;height:1px;background:#bdbdbd"></div>
<div style="position:absolute;left:33px;top:443px;width:1220px;height:1px;background:#d4d4d4"></div>
<div style="position:absolute;left:0px;top:469px;width:32px;height:1px;background:#bdbdbd"></div>
<div style="position:absolute;left:33px;top:469px;width:1220px;height:1px;background:#d4d4d4"></div>
<div style="position:absolute;left:0px;top:491px;width:32px;height:1px;background:#bdbdbd"></div>
<div style="position:absolute;left:33px;top:491px;width:1220px;height:1px;background:#d4d4d4"></div>
<div style="position:absolute;left:0px;top:513px;width:32px;height:1px;background:#bdbdbd"></div>
<div style="position:absolute;left:33px;top:513px;width:1220px;height:1px;background:#d4d4d4"></div>
<div style="position:absolute;left:0px;top:535px;width:32px;height:1px;background:#bdbdbd"></div>
<div style="position:absolute;left:33px;top:535px;width:1220px;height:1px;background:#d4d4d4"></div>
<div style="position:absolute;left:0px;top:557px;width:32px;height:1px;background:#bdbdbd"></div>
<div style="position:absolute;left:33px;top:557px;width:1220px;height:1px;background:#d4d4d4"></div>
<div style="position:absolute;left:0px;top:579px;width:32px;height:1px;background:#bdbdbd"></div>
<div style="position:absolute;left:33px;top:579px;width:1220px;height:1px;background:#d4d4d4"></div>
<div style="position:absolute;left:0px;top:601px;width:32px;height:1px;background:#bdbdbd"></div>
<div style="position:absolute;left:33px;top:601px;width:1220px;height:1px;background:#d4d4d4"></div>
<div style="position:absolute;left:0px;top:623px;width:32px;height:1px;background:#bdbdbd"></div>
<div style="position:absolute;left:33px;top:623px;width:1220px;height:1px;background:#d4d4d4"></div>
<div style="position:absolute;left:0px;top:649px;width:32px;height:1px;background:#bdbdbd"></div>
<div style="position:absolute;left:33px;top:649px;width:1220px;height:1px;background:#d4d4d4"></div>
<div style="position:absolute;left:0px;top:675px;width:32px;height:1px;background:#bdbdbd"></div>
<div style="position:absolute;left:33px;top:675px;width:1220px;height:1px;background:#d4d4d4"></div>
<div style="position:absolute;left:0px;top:701px;width:32px;height:1px;background:#bdbdbd"></div>
<div style="position:absolute;left:33px;top:701px;width:1220px;height:1px;background:#d4d4d4"></div>
<div style="position:absolute;left:0px;top:727px;width:32px;height:1px;background:#bdbdbd"></div>
<div style="position:absolute;left:33px;top:727px;width:1220px;height:1px;background:#d4d4d4"></div>
<div style="position:absolute;left:0px;top:753px;width:32px;height:1px;background:#bdbdbd"></div>
<div style="position:absolute;left:33px;top:753px;width:1220px;height:1px;background:#d4d4d4"></div>
<div style="position:absolute;left:0px;top:779px;width:32px;height:1px;background:#bdbdbd"></div>
<div style="position:absolute;left:33px;top:779px;width:1220px;height:1px;background:#d4d4d4"></div>
<div style="position:absolute;left:0px;top:805px;width:32px;height:1px;background:#bdbdbd"></div>
<div style="position:absolute;left:33px;top:805px;width:1220px;height:1px;background:#d4d4d4"></div>
<div style="position:absolute;left:0px;top:831px;width:32px;height:1px;background:#bdbdbd"></div>
<div style="position:absolute;left:33px;top:831px;width:1220px;height:1px;background:#d4d4d4"></div>
<div style="position:absolute;left:0px;top:857px;width:32px;height:1px;background:#bdbdbd"></div>
<div style="position:absolute;left:33px;top:857px;width:1220px;height:1px;background:#d4d4d4"></div>
<div style="position:absolute;left:253px;top:277px;width:1px;height:596px;background:#d4d4d4"></div>
<div style="position:absolute;left:474px;top:277px;width:1px;height:596px;background:#d4d4d4"></div>
<div style="position:absolute;left:695px;top:277px;width:1px;height:596px;background:#d4d4d4"></div>
<div style="position:absolute;left:916px;top:277px;width:1px;height:596px;background:#d4d4d4"></div>
<div style="position:absolute;left:1137px;top:277px;width:1px;height:596px;background:#d4d4d4"></div>
<div style="position:absolute;left:1197px;top:277px;width:1px;height:596px;background:#d4d4d4"></div>
<div style="position:absolute;left:0px;top:299px;width:32px;height:37px;background:#d2d2d2"></div>
<div style="position:absolute;left:33px;top:277px;width:1165px;height:22px;background:#50e0d0"></div>
<div style="position:absolute;left:33px;top:399px;width:1165px;height:23px;background:#50e0d0"></div>
<div style="position:absolute;left:33px;top:469px;width:1165px;height:23px;background:#50e0d0"></div>
<div style="position:absolute;left:33px;top:421px;width:221px;height:23px;background:#daf3f1"></div>
<div style="position:absolute;left:33px;top:491px;width:221px;height:133px;background:#daf3f1"></div>
<div class="t" style="left:12.05px;top:279.72px;font-size:16px;color:#111;">1</div>
<div class="t" style="left:12.05px;top:317.72px;font-size:16px;color:#217346;">2</div>
<div class="t" style="left:12.05px;top:358.72px;font-size:16px;color:#111;">3</div>
<div class="t" style="left:12.05px;top:380.72px;font-size:16px;color:#111;">4</div>
<div class="t" style="left:12.05px;top:402.72px;font-size:16px;color:#111;">5</div>
<div class="t" style="left:12.05px;top:424.72px;font-size:16px;color:#111;">6</div>
<div class="t" style="left:12.05px;top:450.72px;font-size:16px;color:#111;">7</div>
<div class="t" style="left:12.05px;top:472.72px;font-size:16px;color:#111;">8</div>
<div class="t" style="left:12.05px;top:494.72px;font-size:16px;color:#111;">9</div>
<div class="t" style="left:7.60px;top:516.72px;font-size:16px;color:#111;">10</div>
<div class="t" style="left:8.20px;top:538.72px;font-size:16px;color:#111;">11</div>
<div class="t" style="left:7.60px;top:560.72px;font-size:16px;color:#111;">12</div>
<div class="t" style="left:7.60px;top:582.72px;font-size:16px;color:#111;">13</div>
<div class="t" style="left:7.60px;top:604.72px;font-size:16px;color:#111;">14</div>
<div class="t" style="left:7.60px;top:630.72px;font-size:16px;color:#111;">15</div>
<div class="t" style="left:7.60px;top:656.72px;font-size:16px;color:#111;">16</div>
<div class="t" style="left:7.60px;top:682.72px;font-size:16px;color:#111;">17</div>
<div class="t" style="left:7.60px;top:708.72px;font-size:16px;color:#111;">18</div>
<div class="t" style="left:7.60px;top:734.72px;font-size:16px;color:#111;">19</div>
<div class="t" style="left:7.60px;top:760.72px;font-size:16px;color:#111;">20</div>
<div class="t" style="left:7.60px;top:786.72px;font-size:16px;color:#111;">21</div>
<div class="t" style="left:7.60px;top:812.72px;font-size:16px;color:#111;">22</div>
<div class="t" style="left:7.60px;top:838.72px;font-size:16px;color:#111;">23</div>
<div class="t" style="left:7.60px;top:864.72px;font-size:16px;color:#111;">24</div>
<div style="position:absolute;left:1252px;top:276px;width:1px;height:597px;background:#c6c6c6"></div>
<div class="t" style="left:36.60px;top:279.72px;font-size:16px;color:#000;font-weight:bold;">Qualifications Exchange</div>
<div class="t" style="left:36.40px;top:402.72px;font-size:16px;color:#000;font-weight:bold;transform:scaleX(1.0090);">Employer Space</div>
<div class="t" style="left:36.90px;top:424.72px;font-size:16px;color:#000;transform:scaleX(1.0102);">Profession:</div>
<div class="t" style="left:36.60px;top:472.72px;font-size:16px;color:#000;font-weight:bold;transform:scaleX(1.0128);">Interviewee Space</div>
<div class="t" style="left:532.00px;top:472.72px;font-size:16px;color:#000;font-weight:bold;transform:scaleX(0.9928);">Qualifications</div>
<div class="t" style="left:920.10px;top:472.72px;font-size:16px;color:#000;font-weight:bold;transform:scaleX(1.0058);">Bonus Qualification</div>
<div class="t" style="left:1141.00px;top:472.72px;font-size:16px;color:#000;font-weight:bold;transform:scaleX(1.0106);">Points</div>
<div class="t" style="left:36.90px;top:494.72px;font-size:16px;color:#000;transform:scaleX(1.0155);">Player 1:</div>
<div class="t" style="left:36.90px;top:516.72px;font-size:16px;color:#000;transform:scaleX(1.0155);">Player 2:</div>
<div class="t" style="left:36.90px;top:538.72px;font-size:16px;color:#000;transform:scaleX(1.0155);">Player 3:</div>
<div class="t" style="left:36.90px;top:560.72px;font-size:16px;color:#000;transform:scaleX(1.0155);">Player 4:</div>
<div class="t" style="left:36.90px;top:582.72px;font-size:16px;color:#000;transform:scaleX(1.0155);">Player 5:</div>
<div class="t" style="left:36.90px;top:604.72px;font-size:16px;color:#000;transform:scaleX(1.0155);">Player 6:</div>
<div style="position:absolute;left:31px;top:297px;width:224px;height:41px;border:2px solid #217346;box-sizing:border-box"></div>
<div style="position:absolute;left:250px;top:333px;width:7px;height:7px;background:#217346;border:1px solid #fff;box-sizing:border-box"></div>
<div style="position:absolute;left:1253px;top:255px;width:25px;height:618px;background:#e6e6e6"></div>
<div style="position:absolute;left:1256px;top:257px;width:19px;height:19px;background:#fff;border:1px solid #c6c6c6;box-sizing:border-box"></div>
<svg style="position:absolute;left:1260px;top:263px;" width="11" height="6" viewBox="0 0 11 6"><path d="M0.5 5.5 L5.5 0.5 L10.5 5.5 Z" fill="#777"/></svg>
<div style="position:absolute;left:1256px;top:276px;width:19px;height:552px;background:#fff;border:1px solid #c6c6c6;box-sizing:border-box"></div>
<div style="position:absolute;left:1256px;top:828px;width:19px;height:26px;background:#dadada"></div>
<div style="position:absolute;left:1256px;top:854px;width:19px;height:19px;background:#fff;border:1px solid #c6c6c6;box-sizing:border-box"></div>
<svg style="position:absolute;left:1260px;top:861px;" width="11" height="6" viewBox="0 0 11 6"><path d="M0.5 0.5 L5.5 5.5 L10.5 0.5 Z" fill="#777"/></svg>
<div style="position:absolute;left:0px;top:873px;width:1278px;height:28px;background:#e6e6e6"></div>
<div style="position:absolute;left:0px;top:872px;width:1253px;height:1px;background:#c6c6c6"></div>
<svg style="position:absolute;left:25px;top:880px;" width="8" height="12" viewBox="0 0 8 12"><path d="M7 1 L1 6 L7 11 Z" fill="#c8c8c8"/></svg>
<svg style="position:absolute;left:55px;top:880px;" width="8" height="12" viewBox="0 0 8 12"><path d="M1 1.5 L6.5 6.3 L1 11 Z" fill="#0f6b36"/></svg>
<div style="position:absolute;left:102px;top:876px;width:1px;height:21px;background:#b0b0b0"></div>
<div style="position:absolute;left:494px;top:876px;width:1px;height:21px;background:#b0b0b0"></div>
<div style="position:absolute;left:582px;top:876px;width:1px;height:21px;background:#b0b0b0"></div>
<div style="position:absolute;left:670px;top:876px;width:1px;height:21px;background:#b0b0b0"></div>
<div class="t" style="left:116.70px;top:873.67px;font-size:16.5px;color:#444;transform:scaleX(1.0391);">Instructions</div>
<div style="position:absolute;left:219px;top:872px;width:188px;height:26px;background:#fff;border-left:1px solid #b0b0b0;border-right:1px solid #b0b0b0;box-sizing:border-box"></div>
<div style="position:absolute;left:219px;top:896px;width:188px;height:2px;background:#217346"></div>
<div class="t" style="left:231.50px;top:873.47px;font-size:16.5px;color:#217346;font-weight:bold;">Common Play Space</div>
<div class="t" style="left:420.40px;top:873.67px;font-size:16.5px;color:#444;transform:scaleX(0.9826);">Player 1</div>
<div class="t" style="left:508.40px;top:873.67px;font-size:16.5px;color:#444;transform:scaleX(0.9776);">Player 2</div>
<div class="t" style="left:596.50px;top:873.67px;font-size:16.5px;color:#444;transform:scaleX(0.9710);">Player 3</div>
<div class="t" style="left:684.30px;top:873.67px;font-size:16.5px;color:#444;">P ...</div>
<svg style="position:absolute;left:725px;top:876px;" width="22" height="22" viewBox="0 0 22 22"><circle cx="11" cy="10.5" r="9.3" fill="none" stroke="#777" stroke-width="1.3"/><path d="M11 5 V16 M5.5 10.5 H16.5" stroke="#555" stroke-width="1.5"/></svg>
<svg style="position:absolute;left:763px;top:878px;" width="5" height="16" viewBox="0 0 5 16"><rect x="1" y="1" width="2.2" height="2.2" fill="#aaa"/><rect x="1" y="6.5" width="2.2" height="2.2" fill="#aaa"/><rect x="1" y="12" width="2.2" height="2.2" fill="#aaa"/></svg>
<div style="position:absolute;left:782px;top:877px;width:471px;height:19px;background:#dadada"></div>
<div style="position:absolute;left:782px;top:877px;width:19px;height:19px;background:#fff;border:1px solid #c6c6c6;box-sizing:border-box"></div>
<svg style="position:absolute;left:787px;top:881px;" width="7" height="11" viewBox="0 0 7 11"><path d="M6 0.5 L0.5 5.5 L6 10.5 Z" fill="#666"/></svg>
<div style="position:absolute;left:800px;top:877px;width:325px;height:19px;background:#fff;border:1px solid #c6c6c6;box-sizing:border-box"></div>
<div style="position:absolute;left:1234px;top:877px;width:19px;height:19px;background:#fff;border:1px solid #c6c6c6;box-sizing:border-box"></div>
<svg style="position:absolute;left:1240px;top:881px;" width="7" height="11" viewBox="0 0 7 11"><path d="M0.5 0.5 L6 5.5 L0.5 10.5 Z" fill="#666"/></svg>
<div style="position:absolute;left:0px;top:901px;width:1278px;height:1px;background:#d6d6d6"></div>
<div style="position:absolute;left:0px;top:902px;width:1278px;height:27px;background:#f3f2f1"></div>
<div style="position:absolute;left:0px;top:929px;width:1278px;height:1px;background:#217346"></div>
<svg style="position:absolute;left:7px;top:906px;" width="18" height="17" viewBox="0 0 18 17"><rect x="2.6" y="2.6" width="13" height="12.8" fill="#fff" stroke="#555" stroke-width="1.3"/><rect x="2" y="2" width="14" height="3.5" fill="#555"/><rect x="5" y="7" width="2" height="1.2" fill="#555"/><rect x="8.3" y="7" width="2" height="1.2" fill="#555"/><rect x="11.600000000000001" y="7" width="2" height="1.2" fill="#555"/><rect x="5" y="10" width="2" height="1.2" fill="#555"/><rect x="8.3" y="10" width="2" height="1.2" fill="#555"/><rect x="11.600000000000001" y="10" width="2" height="1.2" fill="#555"/><rect x="5" y="13" width="2" height="1.2" fill="#555"/><rect x="8.3" y="13" width="2" height="1.2" fill="#555"/><rect x="11.600000000000001" y="13" width="2" height="1.2" fill="#555"/><circle cx="4.3" cy="4.3" r="3.4" fill="#5a5a5a" stroke="#f3f2f1" stroke-width="0.6"/></svg>
<div style="position:absolute;left:928px;top:902px;width:42px;height:26px;background:#c8c6c4"></div>
<svg style="position:absolute;left:940px;top:906px;" width="18" height="18" viewBox="0 0 18 18"><rect x="1.6" y="1.6" width="15" height="15" fill="none" stroke="#6a6a6a" stroke-width="1.3"/><path d="M6.6 1.5 V16.5 M11.6 1.5 V16.5 M1.5 6.6 H16.5 M1.5 11.6 H16.5" stroke="#6a6a6a" stroke-width="1.2"/></svg>
<svg style="position:absolute;left:982px;top:906px;" width="18" height="18" viewBox="0 0 18 18"><rect x="0.8" y="1.6" width="16" height="15" fill="none" stroke="#6a6a6a" stroke-width="1.3"/><rect x="5" y="3.8" width="7.8" height="10" fill="#fff" stroke="#6a6a6a" stroke-width="1.2"/><path d="M6.8 6.8 H11 M6.8 8.8 H11 M6.8 10.8 H11" stroke="#6a6a6a" stroke-width="0.9"/></svg>
<svg style="position:absolute;left:1024px;top:906px;" width="18" height="18" viewBox="0 0 18 18"><rect x="0.8" y="1.6" width="16" height="15" fill="none" stroke="#6a6a6a" stroke-width="1.3"/><path d="M5.7 1.5 V10 H10.4 V1.5 M0.8 10 H5.7" fill="none" stroke="#6a6a6a" stroke-width="1.2"/></svg>
<div style="position:absolute;left:1059px;top:914px;width:10px;height:2px;background:#555"></div>
<div style="position:absolute;left:1073px;top:915px;width:125px;height:1px;background:#a6a6a6"></div>
<div style="position:absolute;left:1133px;top:908px;width:6px;height:14px;background:#6a6a6a"></div>
<svg style="position:absolute;left:1201px;top:909px;" width="12" height="12" viewBox="0 0 12 12"><path d="M6 0.5 V11.5 M0.5 6 H11.5" stroke="#555" stroke-width="2"/></svg>
<div class="t" style="left:1225.20px;top:907.74px;font-size:13px;color:#555;transform:scaleX(0.8954);">100%</div>
</body></html>
